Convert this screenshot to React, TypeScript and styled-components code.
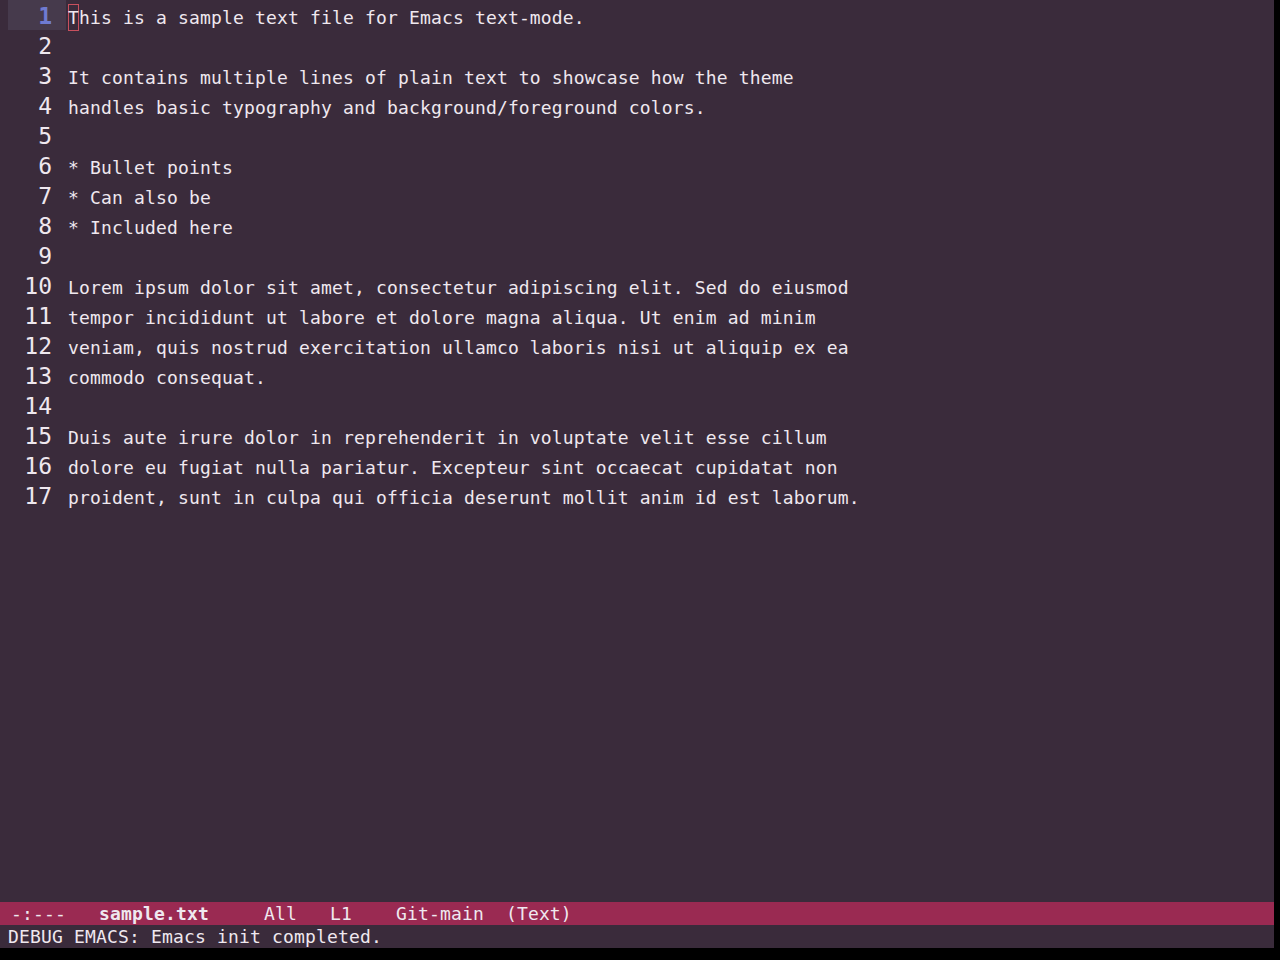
import styled, {createGlobalStyle} from 'styled-components'

const lines: string[] = [
	'This is a sample text file for Emacs text-mode.',
	'',
	'It contains multiple lines of plain text to showcase how the theme',
	'handles basic typography and background/foreground colors.',
	'',
	'* Bullet points',
	'* Can also be',
	'* Included here',
	'',
	'Lorem ipsum dolor sit amet, consectetur adipiscing elit. Sed do eiusmod',
	'tempor incididunt ut labore et dolore magna aliqua. Ut enim ad minim',
	'veniam, quis nostrud exercitation ullamco laboris nisi ut aliquip ex ea',
	'commodo consequat.',
	'',
	'Duis aute irure dolor in reprehenderit in voluptate velit esse cillum',
	'dolore eu fugiat nulla pariatur. Excepteur sint occaecat cupidatat non',
	'proident, sunt in culpa qui officia deserunt mollit anim id est laborum.',
]

const currentLine = 1

function App() {
	return (
		<>
			<GlobalStyle />
			<Screen>
				<Frame>
					<Buffer>
						{lines.map((text, i) => {
							const num = i + 1
							const isCurrent = num === currentLine
							return (
								<Row key={num}>
									<LineNumber $current={isCurrent}>
										<NumberGlyph>{num}</NumberGlyph>
									</LineNumber>
									<Spacer />
									<LineText>
										{isCurrent ? (
											<>
												<Cursor>{text.charAt(0)}</Cursor>
												{text.slice(1)}
											</>
										) : (
											text
										)}
									</LineText>
								</Row>
							)
						})}
					</Buffer>
					<ModeLine>
						{'-:---   '}
						<BufferName>sample.txt</BufferName>
						{'     All   L1    Git-main  (Text)'}
					</ModeLine>
					<EchoArea>DEBUG EMACS: Emacs init completed.</EchoArea>
				</Frame>
			</Screen>
		</>
	)
}

const GlobalStyle = createGlobalStyle`
	html, body {
		margin: 0;
		padding: 0;
		background: #000;
	}
`
const Screen = styled.div`
	width: 1280px;
	height: 960px;
	background: #000;
	overflow: hidden;
`
const Frame = styled.div`
	display: flex;
	flex-direction: column;
	width: 1274px;
	height: 948px;
	background: #3a2b3b;
	font-family: 'DejaVu Sans Mono', monospace;
	color: #efe8ef;
`
const Buffer = styled.div`
	flex: 1;
	display: flex;
	flex-direction: column;
	padding-left: 8px;
`
const Row = styled.div`
	display: flex;
	align-items: baseline;
	height: 30px;
	line-height: 30px;
`
const LineNumber = styled.div<{$current: boolean}>`
	width: 44px;
	padding-right: 14px;
	text-align: right;
	font-size: 23px;
	color: ${(p) => (p.$current ? '#6f7bd2' : '#efe8ef')};
	background: ${(p) => (p.$current ? '#463a4c' : 'transparent')};
	font-weight: ${(p) => (p.$current ? 'bold' : 'normal')};
`
const NumberGlyph = styled.span`
	position: relative;
	top: 1px;
`
const Spacer = styled.div`
	width: 2px;
`
const LineText = styled.div`
	position: relative;
	top: 1px;
	font-size: 18px;
	letter-spacing: 0.16px;
	white-space: pre;
`
const Cursor = styled.span`
	display: inline-block;
	height: 27px;
	line-height: 27px;
	box-shadow: inset 0 0 0 1px #c8505e;
`
const ModeLine = styled.div`
	height: 23px;
	line-height: 23px;
	background: #9a2a52;
	padding-left: 11px;
	font-size: 18px;
	letter-spacing: 0.16px;
	white-space: pre;
`
const BufferName = styled.span`
	font-weight: bold;
`
const EchoArea = styled.div`
	height: 23px;
	line-height: 23px;
	padding-left: 8px;
	font-size: 18px;
	letter-spacing: 0.16px;
	white-space: pre;
`

export default App
